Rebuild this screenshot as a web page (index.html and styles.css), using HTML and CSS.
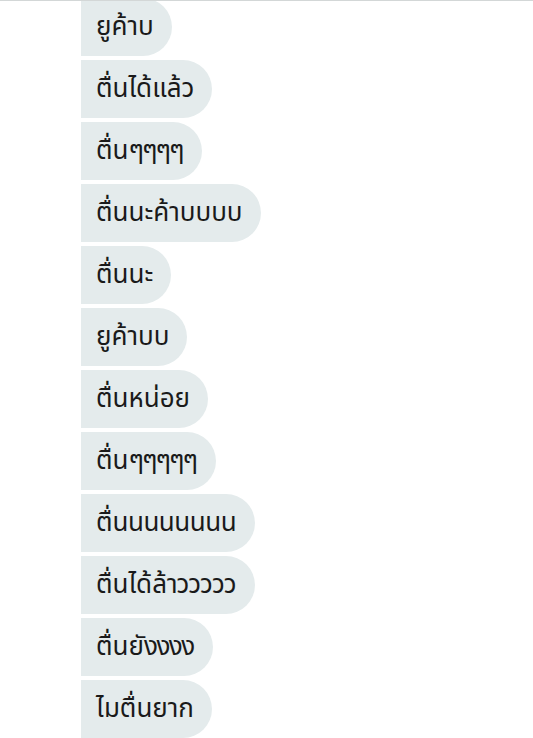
FILE: index.html
```html
<!DOCTYPE html>
<html lang="th">
<head>
<meta charset="utf-8">
<link rel="stylesheet" href="styles.css">
</head>
<body>
<div class="topline"></div>
<div class="chat">
  <div class="bubble">ยูค้าบ</div>
  <div class="bubble">ตื่นได้แล้ว</div>
  <div class="bubble">ตื่น<span class="rep">ๆๆๆ</span>ๆ</div>
  <div class="bubble">ตื่นนะค้าบบบบ</div>
  <div class="bubble">ตื่นนะ</div>
  <div class="bubble">ยูค้าบบ</div>
  <div class="bubble">ตื่นหน่อย</div>
  <div class="bubble">ตื่น<span class="rep">ๆๆๆๆ</span>ๆ</div>
  <div class="bubble">ตื่<span class="nn">นนนนนนน</span>น</div>
  <div class="bubble">ตื่นได้ล้<span class="vv">าวววว</span>ว</div>
  <div class="bubble">ตื่นยั<span class="ng">งงง</span>ง</div>
  <div class="bubble">ไมตื่นยาก</div>
</div>
</body>
</html>
```
FILE: styles.css
```css
html, body {
  margin: 0;
  padding: 0;
  background: #ffffff;
  overflow: hidden;
}
body {
  width: 533px;
  height: 738px;
  font-family: "Noto Sans Thai", "Noto Sans", "DejaVu Sans", sans-serif;
}
.topline {
  height: 1px;
  background: #d3d7d7;
  position: relative;
  z-index: 1;
}
.chat {
  display: flex;
  flex-direction: column;
  align-items: flex-start;
  gap: 4px;
  margin-top: -3px;
  padding-left: 81px;
}
.bubble {
  height: 58px;
  box-sizing: border-box;
  display: flex;
  align-items: center;
  padding: 0 18px 0 15px;
  background: #e4ebec;
  border-radius: 0 29px 29px 0;
  font-size: 26px;
  color: #1a1a1a;
  white-space: nowrap;
}
.rep {
  letter-spacing: -2px;
}
.nn {
  letter-spacing: -0.5px;
}
.vv {
  letter-spacing: -1px;
}
.ng {
  letter-spacing: -1.5px;
}
```
